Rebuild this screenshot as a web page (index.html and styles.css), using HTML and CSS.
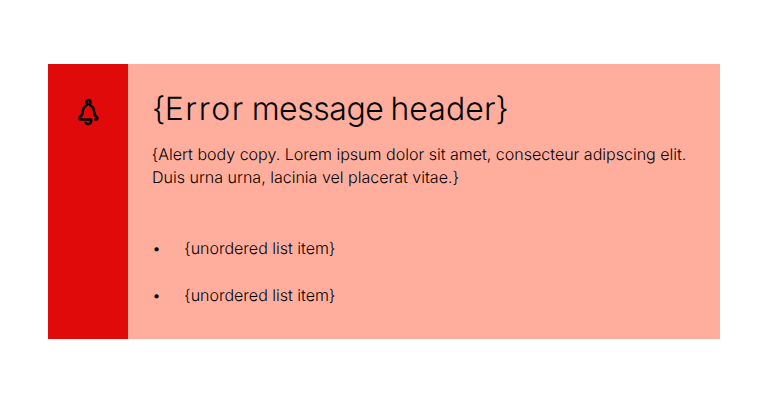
FILE: index.html
```
<!DOCTYPE html>
<html lang="en">
<head>
<meta charset="utf-8">
<title>Error message</title>
<link rel="stylesheet" href="styles.css">
</head>
<body>
<section class="alert" role="alert">
  <div class="alert-icon">
    <svg width="32" height="32" viewBox="0 0 32 32" fill="none" stroke="#000" stroke-width="2.500" stroke-linecap="round" stroke-linejoin="round" aria-hidden="true">
      <circle cx="16.400" cy="6" r="2.100"/>
      <path d="M14.500 9.300C11.500 10.500 10.800 12.700 10.700 16C10.600 19 9.500 20 8 21C7 22 7.200 23.500 8.500 23.500H19.200V25C19.200 28.400 15 28.500 13.600 26.700M18.300 9.300C21.300 10.500 22 12.700 22.100 16C22.200 19 23.300 20 24.800 21C25.700 22 25.600 23.500 24.300 23.500H23.200"/>
    </svg>
  </div>
  <div class="alert-content">
    <h1><span class="brace">{</span><span class="word-error">Error</span> <span class="word-message">message</span> <span class="word-header">header</span><span class="brace">}</span></h1>
    <p>{Alert body copy. Lorem ipsum dolor sit amet, consecteur adipscing elit. Duis urna urna, lacinia vel placerat vitae.}</p>
    <ul>
      <li>{unordered list item}</li>
      <li>{unordered list item}</li>
    </ul>
  </div>
</section>
</body>
</html>
```
FILE: styles.css
```
* { box-sizing: border-box; }
body { margin: 0; padding: 64px 48px; background: #fff; color: #000; font: 300 16px/23px Inter, sans-serif; text-rendering: geometricPrecision; }
.alert { display: flex; height: 275px; background: #ffae9e; }
.alert-icon { width: 80px; padding: 32px 24px; background: #e10a0a; }
.alert-icon svg { display: block; }
.alert-content { flex: 1; padding: 25px 24px 24px; }
h1 { margin: 0; font: 300 32px/40px Inter, sans-serif; white-space: nowrap; word-spacing: -2px; }
.brace { letter-spacing: -0.5px; }
.word-error { letter-spacing: 1.5px; }
.word-message { letter-spacing: -0.450px; }
.word-header { letter-spacing: 0.100px; }
p { width: 544px; margin: 14px 0 0; text-indent: -0.400px; letter-spacing: 0.010px; }
ul { display: grid; gap: 24px; margin: 48px 0 0; padding: 0; list-style: none; }
li { display: flex; }
li::before { content: "•"; width: 32px; }
```
